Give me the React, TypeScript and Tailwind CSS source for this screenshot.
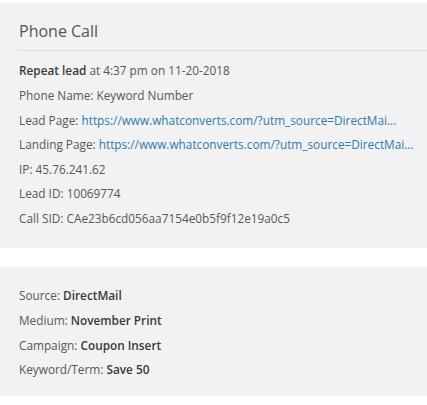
import React from 'react';

const font = { fontFamily: '"Open Sans", "Liberation Sans", sans-serif' };

function Row({ children }: { children: React.ReactNode }) {
  return <div className="h-[24.6px] flex items-center whitespace-nowrap">{children}</div>;
}

function App() {
  return (
    <div className="min-h-screen bg-white pt-[3px] text-[11.8px] text-[#575757]" style={font}>
      <section className="bg-[#f2f2f2] h-[245px]">
        <div className="pl-[19px] pt-[18px] pb-[9px]">
          <h1 className="text-[16px] leading-[20px] text-[#555]">Phone Call</h1>
        </div>
        <div className="ml-[17px] border-t border-[#dedede]" />
        <div className="pl-[19px] pt-[8px]">
          <Row>
            <span className="font-semibold text-[#3a3a3a]">Repeat lead</span>&nbsp;at 4:37 pm on 11-20-2018
          </Row>
          <Row>Phone Name: Keyword Number</Row>
          <Row>
            Lead Page:&nbsp;<span className="text-[#2f7ab0]">https://www.whatconverts.com/?utm_source=DirectMai...</span>
          </Row>
          <Row>
            Landing Page:&nbsp;<span className="text-[#2f7ab0]">https://www.whatconverts.com/?utm_source=DirectMai...</span>
          </Row>
          <Row>IP: 45.76.241.62</Row>
          <Row>Lead ID: 10069774</Row>
          <Row>Call SID: CAe23b6cd056aa7154e0b5f9f12e19a0c5</Row>
        </div>
      </section>
      <section className="bg-[#f2f2f2] mt-[19px] h-[129px] pl-[19px] pt-[17px]">
        <Row>
          Source:&nbsp;<span className="font-semibold text-[#3a3a3a]">DirectMail</span>
        </Row>
        <Row>
          Medium:&nbsp;<span className="font-semibold text-[#3a3a3a]">November Print</span>
        </Row>
        <Row>
          Campaign:&nbsp;<span className="font-semibold text-[#3a3a3a]">Coupon Insert</span>
        </Row>
        <Row>
          Keyword/Term:&nbsp;<span className="font-semibold text-[#3a3a3a]">Save 50</span>
        </Row>
      </section>
    </div>
  );
}

export default App;
